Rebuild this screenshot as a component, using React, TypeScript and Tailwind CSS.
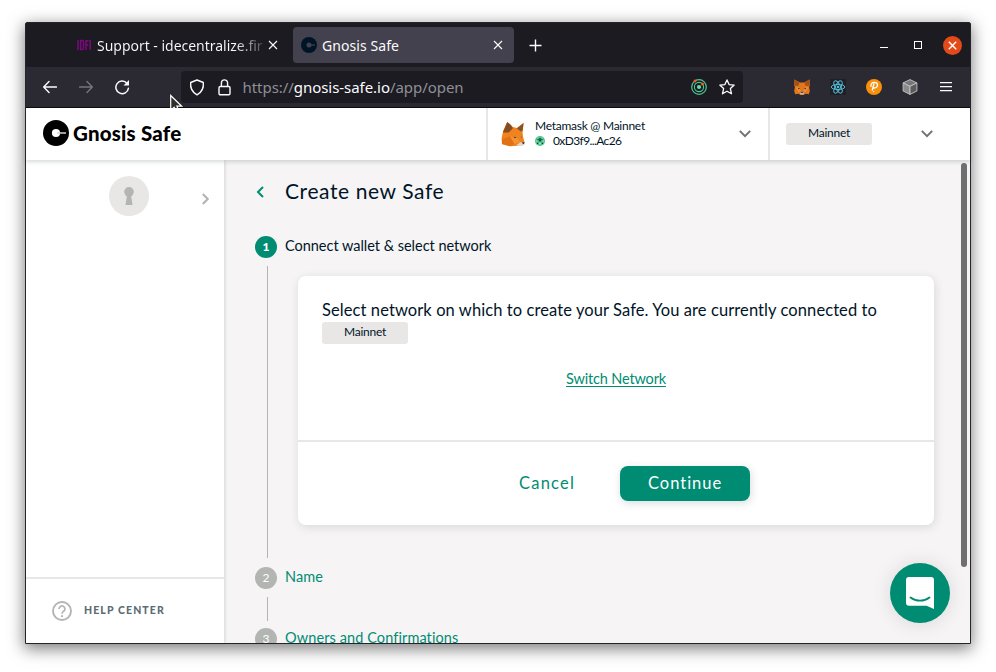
import type { ReactNode } from "react";

const UI = "font-['Noto_Sans','Open_Sans',sans-serif]";
const APP = "font-['Lato','Liberation_Sans',sans-serif]";

function CloseX({ className }: { className: string }) {
  return (
    <svg className={className} viewBox="0 0 10 10" fill="none" stroke="currentColor">
      <path d="M1 1l8 8M9 1l-8 8" strokeWidth="1.1" />
    </svg>
  );
}

function TabStrip() {
  return (
    <div className="flex h-[44px] shrink-0 items-center bg-[#1c1b22] pl-[51px] pr-[8.500px] text-[#fbfbfe]">
      <svg className="h-[12px] w-[14px]" viewBox="0 0 14 12" fill="none" stroke="#7d0a7d" strokeWidth="1.500">
        <path d="M1 1v10M3.600 1.600v8.800h1.600q1.300 0 1.300-1.400V3q0-1.400-1.300-1.400zM9 11V1.700h2.600M9 6h2.200M13.200 1v10" />
      </svg>
      <div className="ml-[6px] w-[168px] overflow-hidden whitespace-nowrap bg-[linear-gradient(90deg,#fbfbfe_82%,#1c1b22_103%)] bg-clip-text text-[14px] tracking-[-0.020px] text-transparent">
        Support - idecentralize.fir
      </div>
      <CloseX className="ml-[3px] h-[10px] w-[10px]" />
      <div className="ml-[15px] flex h-[36px] w-[221px] items-center rounded-[4px] bg-[#42414d] pl-[8px] pr-[11px]">
        <svg className="h-[16px] w-[16px]" viewBox="0 0 16 16">
          <circle cx="8" cy="8" r="8" fill="#001428" />
          <circle cx="8" cy="8" r="2.500" fill="#42414d" />
          <path d="M8 8h6" stroke="#42414d" strokeWidth="1.200" />
        </svg>
        <span className="ml-[5px] text-[14px] tracking-[0.07px]">Gnosis Safe</span>
        <CloseX className="ml-auto h-[10px] w-[10px]" />
      </div>
      <svg className="ml-[15px] h-[13px] w-[13px]" viewBox="0 0 13 13" stroke="#fbfbfe" strokeWidth="1.400">
        <path d="M6.500 .5v12M.5 6.500h12" />
      </svg>
      <svg className="ml-auto h-[10px] w-[8px]" viewBox="0 0 8 10" fill="#fff">
        <rect y="7" width="8" height="1" />
      </svg>
      <div className="ml-[26px] h-[8px] w-[8px] border border-white" />
      <div className="ml-[21px] flex h-[19px] w-[19px] items-center justify-center rounded-full bg-[#e24a1a]">
        <svg className="h-[9px] w-[9px]" viewBox="0 0 9 9" stroke="#fff" strokeWidth="1.400">
          <path d="M.8 .8l7.400 7.400M8.200 .8L.8 8.200" />
        </svg>
      </div>
    </div>
  );
}

function SmallFox() {
  return (
    <svg className="h-[16px] w-[16px]" viewBox="0 0 16 16">
      <path d="M.3 .4L6 3.600h4L15.700 .4l.1 5.600-.7 2.500.8 3.400-1.100 3.300-3.300-.4L9.500 16h-3L4.500 14.800l-3.300.4-1.100-3.300.8-3.400L.2 6z" fill="#e2761b" />
      <path d="M.3 .4L5.600 3.800 4.200 7 .5 6.700zM15.700 .4L10.400 3.800 11.800 7l3.700-.3z" fill="#a5501a" />
      <path d="M1.400 8.500l3-.8 2.300 4.100L4.800 14zM14.600 8.500l-3-.8-2.300 4.100 1.900 2.200z" fill="#ee8a35" />
      <path d="M4 8.800l2 .8-1.500.7zM12 8.800l-2 .8 1.500.7z" fill="#2b2028" />
      <path d="M6 14l.8-1.500h2.400L10 14l-.6 1.500H6.600z" fill="#c9b8ac" />
      <path d="M6.900 12.700h2.200l.3 1H6.600z" fill="#2b2028" />
    </svg>
  );
}

function Toolbar() {
  return (
    <div className="flex h-[41px] shrink-0 items-center border-b border-[#0c0c0d] bg-[#2b2a33] pl-[17px] pr-[18px] text-[#fbfbfe]">
      <svg className="h-[14px] w-[14px]" viewBox="0 0 14 14" fill="none" stroke="currentColor" strokeWidth="1.400" strokeLinecap="round" strokeLinejoin="round">
        <path d="M13.400 7H.9M6 1.600L.7 7 6 12.400" />
      </svg>
      <svg className="ml-[22px] h-[14px] w-[14px] text-[#76757c]" viewBox="0 0 14 14" fill="none" stroke="currentColor" strokeWidth="1.400" strokeLinecap="round" strokeLinejoin="round">
        <path d="M.6 7h12.500M8 1.600L13.300 7 8 12.400" />
      </svg>
      <svg className="ml-[22px] h-[16px] w-[15px]" viewBox="0 0 15 16" fill="none" stroke="currentColor" strokeWidth="1.500" strokeLinecap="round">
        <path d="M12 4.300A6.300 6.300 0 1 0 13.400 9.300" />
        <path d="M14 1v5.500H8.500z" fill="currentColor" stroke="none" />
      </svg>
      <div className="ml-[51px] flex h-[32px] w-[562px] items-center rounded-[4px] bg-[#1c1b22] pl-[8px] pr-[8px]">
        <svg className="h-[17px] w-[16px]" viewBox="0 0 16 17" fill="none" stroke="currentColor" strokeWidth="1.400" strokeLinejoin="round">
          <path d="M8 1l6.300 2.500c.6 5.500-1.300 9.600-6.300 12.400C3 13.100 1.100 9 1.700 3.500z" />
        </svg>
        <svg className="ml-[13px] h-[17px] w-[13px]" viewBox="0 0 13 17" fill="none" stroke="currentColor" strokeWidth="1.400">
          <rect x="1" y="7.500" width="11" height="8.300" rx="1.300" />
          <path d="M3.400 7.500V4a3.100 3.100 0 0 1 6.200 0v3.500" />
        </svg>
        <span className="ml-[11.500px] text-[15px] tracking-[-0.05px] text-[#8f8f96]">
          https://<span className="text-[#fbfbfe]">gnosis-safe.io</span>/app/open
        </span>
        <svg className="ml-auto h-[16px] w-[16px]" viewBox="0 0 16 16" fill="none" stroke="#4cc793">
          <circle cx="8" cy="8" r="7.300" strokeWidth="1.200" />
          <circle cx="8" cy="8" r="4.600" strokeWidth="1.100" />
          <circle cx="8" cy="8" r="2.100" fill="#5fe0a8" stroke="none" />
          <circle cx="4" cy="2" r="1.500" fill="#ee5a24" stroke="none" />
          <circle cx="11.500" cy="5" r="1.500" fill="#ee5a24" stroke="none" />
        </svg>
        <svg className="ml-[12px] h-[16px] w-[16px]" viewBox="0 0 16 16" fill="none" stroke="currentColor" strokeWidth="1.300" strokeLinejoin="round">
          <path d="M8 .9l2.100 4.700 5.100.5-3.800 3.500 1.100 5.200L8 12.200l-4.500 2.600 1.100-5.200L.8 6.100l5.100-.5z" />
        </svg>
      </div>
      <div className="ml-auto flex items-center gap-[20px]">
        <SmallFox />
        <svg className="h-[16px] w-[16px]" viewBox="0 0 16 16" fill="none" stroke="#53b9d9" strokeWidth="1">
          <rect width="16" height="16" fill="#202024" stroke="none" />
          <ellipse cx="8" cy="8" rx="6.800" ry="2.600" />
          <ellipse cx="8" cy="8" rx="6.800" ry="2.600" transform="rotate(60 8 8)" />
          <ellipse cx="8" cy="8" rx="6.800" ry="2.600" transform="rotate(120 8 8)" />
          <circle cx="8" cy="8" r="1.300" fill="#53b9d9" stroke="none" />
        </svg>
        <svg className="h-[16px] w-[16px]" viewBox="0 0 16 16" fill="none" stroke="#fff" strokeLinecap="round">
          <circle cx="8" cy="8" r="8" fill="#f7900a" stroke="none" />
          <path d="M7.900 5L6.300 11M5 7.300C4.500 4.800 6.200 3.400 8.300 3.400c2 0 3.200 1 3.200 2.700 0 1.900-1.600 3.100-3.600 2.900" strokeWidth="1.300" />
          <circle cx="7.700" cy="12.600" r=".7" fill="#fff" stroke="none" />
        </svg>
        <svg className="h-[16px] w-[16px]" viewBox="0 0 16 16" stroke="#c4c4c4" strokeWidth=".9" strokeLinejoin="round">
          <path d="M8 .6l6.900 3.300L8 7.400 1.100 3.900z" fill="#77777a" />
          <path d="M1.100 3.900L8 7.400v8L1.100 12z" fill="#8b8b8b" />
          <path d="M14.900 3.900L8 7.400v8l6.900-3.400z" fill="#5c5c5e" />
        </svg>
        <svg className="ml-[2px] h-[12px] w-[12px]" viewBox="0 0 12 12" fill="#fbfbfe">
          <path d="M0 1h12v1.200H0zM0 5h12v1.200H0zM0 9h12v1.200H0z" />
        </svg>
      </div>
    </div>
  );
}

function NetworkBadge() {
  return (
    <div className="h-[22px] w-[86px] rounded-[3px] bg-[#e8e7e6] text-center text-[12px] leading-[20px] tracking-[-0.26px] text-[#001428]">
      Mainnet
    </div>
  );
}

function ChevronDown({ className }: { className: string }) {
  return (
    <svg className={className} viewBox="0 0 12 8" fill="none" stroke="#6f7173" strokeWidth="2">
      <path d="M.8 .9L6 6.100 11.200 .9" />
    </svg>
  );
}

function AppHeader() {
  return (
    <header className="relative z-10 flex h-[52px] shrink-0 bg-white shadow-[0_2px_4px_0_rgba(40,54,61,0.18)]">
      <div className="flex w-[460px] items-center pb-[2px] pl-[17px]">
        <svg className="h-[26px] w-[26px]" viewBox="0 0 26 26">
          <circle cx="13" cy="13" r="13" fill="#000" />
          <circle cx="13" cy="13" r="4.100" fill="#fff" />
          <path d="M14 13h9" stroke="#d5d5d5" strokeWidth="1.500" />
        </svg>
        <span className="ml-[4px] text-[20.500px] font-black tracking-[0.200px] text-black">Gnosis Safe</span>
      </div>
      <div className="flex w-[284px] items-center border-x-2 border-[#e8e7e6] pl-[13px] pr-[17px]">
        <svg className="h-[26px] w-[24px]" viewBox="0 0 25 26">
          <path d="M2.200 10L6.500 .5l6 5.300 4 .9L23.500 1.500 22.500 12l.5 4.500 1.700 5.500-.8 2.500-6.400.7-8 .5L1 23.500l-.4-6z" fill="#ee8320" />
          <path d="M2 11.500L6.500 .5l3.600 2.800L12.400 7 8 11.500z" fill="#874b22" />
          <path d="M23.500 1.500L16.500 7.300l4.200 3 1.800-1z" fill="#87512a" />
          <path d="M1.200 18.500l8.300-3.200 4.500 8-4.500 2.500L1 23.500z" fill="#e07114" />
          <path d="M9.500 15.300l7 1.900 3.400 4-5.900 2.100z" fill="#f59332" />
          <path d="M16 24.800l4-3.300 4 .4-.5 2.800-4 .9z" fill="#dcd6d0" />
          <path d="M22 21.700h2.400l-.5 1.800-1.600-.6zM13 15.800l3 .7-1.400.8zM20.500 15.800l1.500.2-.8.7z" fill="#2c2a30" />
        </svg>
        <div className="ml-[10px] flex flex-col pb-[2px] text-[12px] leading-[15px] text-[#001428]">
          <span className="tracking-[-0.26px]">Metamask @ Mainnet</span>
          <span className="flex items-center">
            <svg className="mt-[1px] h-[10px] w-[10px]" viewBox="0 0 10 10">
              <circle cx="5" cy="5" r="5" fill="#4cc48c" />
              <path d="M2 3.200h1.500V2h3v1.200H8v1H6.200v1H3.800v-1H2z" fill="#1d6b4d" />
              <path d="M4.300 4h1.400v1.300H4.300zM2 6.800h1.200V8H2zM6.800 6.800H8V8H6.800z" fill="#0e3b2c" />
              <path d="M4.200 6.800h1.600v1.500H4.200zM1.200 4.600h1.500v1H1.200zM7.300 4.600h1.500v1H7.300zM2.500 1.500h1v1h-1zM6.500 1.500h1v1h-1z" fill="#b5f0d5" />
            </svg>
            <span className="ml-[8px] tracking-[-0.600px]">0xD3f9...Ac26</span>
          </span>
        </div>
        <ChevronDown className="ml-auto h-[8px] w-[12px]" />
      </div>
      <div className="flex flex-1 items-center pl-[16px] pr-[37px]">
        <NetworkBadge />
        <ChevronDown className="ml-auto h-[8px] w-[12px]" />
      </div>
    </header>
  );
}

function Sidebar() {
  return (
    <aside className="relative flex w-[198px] shrink-0 flex-col bg-white shadow-[1px_0_3px_0_rgba(40,54,61,0.16)]">
      <div className="flex items-start pl-[83px] pt-[16px]">
        <div className="flex h-[40px] w-[40px] items-center justify-center rounded-full bg-[#e8e7e6]">
          <svg className="h-[18px] w-[10px]" viewBox="0 0 10 18" fill="#b2b5b2">
            <circle cx="5" cy="4.800" r="4.800" />
            <path d="M3 8h4l1.500 10h-7z" />
          </svg>
        </div>
        <svg className="ml-[52.500px] mt-[17px] h-[12px] w-[7px]" viewBox="0 0 7 12" fill="none" stroke="#b2b5b2" strokeWidth="2.200">
          <path d="M.8 1l5 5-5 5" />
        </svg>
      </div>
      <div className="mt-auto flex h-[66px] items-center border-t-2 border-[#e8e7e6] pb-[1px] pl-[26px]">
        <svg className="h-[20px] w-[20px]" viewBox="0 0 20 20" fill="none" stroke="#b2b5b2" strokeWidth="1.900">
          <circle cx="10" cy="10" r="9" />
          <path d="M7.100 8a2.900 2.900 0 1 1 4.600 2.200c-1 .8-1.700 1.200-1.700 2.500" strokeWidth="1.700" />
          <path d="M9 14.200h2v1.700H9z" fill="#b2b5b2" stroke="none" />
        </svg>
        <span className="ml-[12px] text-[10.500px] font-black tracking-[1.110px] text-[#5d6d74]">HELP CENTER</span>
      </div>
    </aside>
  );
}

function StepHeading({ n, active, children }: { n: number; active?: boolean; children: ReactNode }) {
  return (
    <div className="flex h-[22px] shrink-0 items-center pl-[29px]">
      <span
        className={
          active
            ? "flex h-[22px] w-[22px] items-center justify-center rounded-full bg-[#008c73] text-[12px] font-black text-white"
            : "flex h-[22px] w-[22px] items-center justify-center rounded-full bg-[#b2b5b2] text-[12px] text-white"
        }
      >
        {n}
      </span>
      <span className={active ? "ml-[8px] pb-[3px] text-[14.500px] text-[#001428]" : "ml-[8px] pb-[3px] text-[14.500px] tracking-[0.100px] text-[#008c73]"}>
        {children}
      </span>
    </div>
  );
}

function CreateSafe() {
  return (
    <main className="flex min-w-0 flex-1 flex-col overflow-hidden bg-[#f6f4f5]">
      <div className="flex h-[62px] shrink-0 items-center pl-[29.500px]">
        <svg className="mt-[2px] h-[12px] w-[8px]" viewBox="0 0 8 12" fill="none" stroke="#008c73" strokeWidth="2">
          <path d="M7 1L2 6l5 5" />
        </svg>
        <h1 className="ml-[21.500px] text-[21px] tracking-[0.600px] text-[#001428]">Create new Safe</h1>
      </div>
      <div className="h-[14px] shrink-0" />
      <StepHeading n={1} active>
        <span className="tracking-[-0.020px]">Connect wallet &amp; select network</span>
      </StepHeading>
      <div className="mt-[8px] flex h-[292px] shrink-0 pl-[41px]">
        <div className="w-px bg-[#b2b5b2]" />
        <section className="ml-[30px] mt-[10px] flex h-[249px] w-[636px] flex-col rounded-[8px] bg-white shadow-[1px_2px_10px_0_rgba(40,54,61,0.14)]">
          <div className="flex h-[166px] flex-col border-b-2 border-[#e8e7e6] px-[24px] pt-[24px]">
            <p className="h-[22px] whitespace-nowrap text-[16.500px] leading-[21px] tracking-[0.088px] text-[#001428]">
              Select network on which to create your Safe. You are currently connected to
            </p>
            <NetworkBadge />
            <a className="mt-[25px] self-center text-[14.500px] leading-[20px] text-[#008c73] underline underline-offset-2">
              <span className="tracking-[-0.160px]">Switch Network</span>
            </a>
          </div>
          <div className="flex flex-1 items-center pl-[221px] text-[16.500px]">
            <button className="h-[35px] pb-[1px] tracking-[1.220px] text-[#008c73]">Cancel</button>
            <button className="ml-[45px] h-[35px] w-[130px] rounded-[8px] bg-[#008c73] pb-[1px] tracking-[1px] text-white shadow-[1px_2px_8px_0_rgba(40,54,61,0.18)]">
              Continue
            </button>
          </div>
        </section>
      </div>
      <div className="h-[9px] shrink-0" />
      <StepHeading n={2}>Name</StepHeading>
      <div className="ml-[41px] mt-[8px] h-[24px] w-px shrink-0 bg-[#b2b5b2]" />
      <div className="h-[7px] shrink-0" />
      <StepHeading n={3}>Owners and Confirmations</StepHeading>
    </main>
  );
}

export default function App() {
  return (
    <div className="relative h-[672px] w-[996px] overflow-hidden bg-white pl-[25px] pt-[22px]">
      <div className={`flex h-[622px] w-[946px] flex-col rounded-t-[2px] border border-[#25242b] shadow-[0_4px_16px_1px_rgba(0,0,0,0.5)] ${UI}`}>
        <TabStrip />
        <Toolbar />
        <div className={`flex min-h-0 flex-1 flex-col ${APP}`}>
          <AppHeader />
          <div className="flex min-h-0 flex-1 bg-[#f6f4f5]">
            <Sidebar />
            <div className="w-[2px]" />
            <CreateSafe />
            <div className="mr-[3px] mt-[3px] h-[404px] w-[6px] rounded-full bg-[#6f6f6f]" />
          </div>
        </div>
      </div>
      <svg className="absolute left-[169px] top-[94px] h-[21px] w-[15px] drop-shadow-[1px_1px_1px_rgba(0,0,0,0.4)]" viewBox="0 0 15 21">
        <path d="M1.700 1.500v15l3.500-3.300 2.300 5.400 2.700-1.200-2.300-5.200h4.800z" fill="#2e2e2e" stroke="#fff" strokeWidth="1.200" />
      </svg>
      <div className="absolute left-[890px] top-[563px] flex h-[60px] w-[60px] items-center justify-center rounded-full bg-[#008c73] shadow-[0_1px_20px_0_rgba(0,0,0,0.12)]">
        <svg className="h-[32px] w-[28px]" viewBox="0 0 28 32">
          <path d="M3 0h22a3 3 0 0 1 3 3v29l-7.500-3.300H3a3 3 0 0 1-3-3V3a3 3 0 0 1 3-3z" fill="#fff" />
          <path d="M4.500 20.500c5.500 4.200 13.500 4.200 19 0" fill="none" stroke="#008c73" strokeWidth="1.900" strokeLinecap="round" />
        </svg>
      </div>
    </div>
  );
}
